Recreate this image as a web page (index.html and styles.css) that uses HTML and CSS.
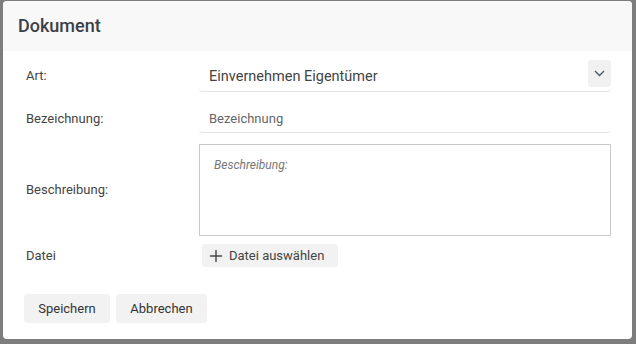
FILE: index.html
```html
<!DOCTYPE html>
<html lang="de">
<head>
    <meta charset="UTF-8">
    <title>Dokument</title>
    <link rel="stylesheet" href="styles.css">
</head>
<body>
    <div class="dialog">
        <div class="dialog-header">
            <h2>Dokument</h2>
        </div>

        <div class="form">
            <label class="label label-select">Art:</label>
            <div class="select">
                <span class="select-value">Einvernehmen Eigentümer</span>
                <span class="select-toggle">
                    <svg width="11" height="7" viewBox="0 0 11 7"><path d="M1 1l4.5 4.5L10 1" fill="none" stroke="#4d5a66" stroke-width="1.4"/></svg>
                </span>
            </div>

            <label class="label label-input">Bezeichnung:</label>
            <div class="input"><span class="placeholder">Bezeichnung</span></div>

            <label class="label label-textarea">Beschreibung:</label>
            <div class="textarea"><span class="placeholder italic">Beschreibung:</span></div>

            <label class="label label-file">Datei</label>
            <div>
                <button class="btn btn-file">
                    <svg width="12" height="12" viewBox="0 0 12 12"><path d="M6 0v12M0 6h12" stroke="#444" stroke-width="1.4"/></svg>
                    Datei auswählen
                </button>
            </div>
        </div>

        <div class="dialog-footer">
            <button class="btn btn-action">Speichern</button>
            <button class="btn btn-action">Abbrechen</button>
        </div>
    </div>
</body>
</html>
```

FILE: styles.css
```css
body {
    margin: 0;
    background: #7d7d7d;
    font-family: Roboto, "Liberation Sans", sans-serif;
    color: #444;
}

.dialog {
    margin: 1px 0 0 3px;
    width: 629px;
    height: 338px;
    background: #fff;
    border-radius: 4px;
    overflow: hidden;
}

.dialog-header {
    height: 50px;
    background: #f8f8f8;
    padding-left: 15px;
}

.dialog-header h2 {
    margin: 0;
    font-size: 18px;
    font-weight: 500;
    line-height: 50px;
    color: #3b4048;
}

/* form grid: each row holds the field plus the space below it */
.form {
    display: grid;
    grid-template-columns: 173px 412px;
    grid-template-rows: 44px 40px 100px 23px;
    align-items: start;
    padding: 9px 0 0 23px;
}

.label {
    font-size: 13px;
    color: #444;
}

.label-select { line-height: 31px; }
.label-input { line-height: 29px; }
.label-textarea { line-height: 92px; }
.label-file { line-height: 23px; }

.select,
.input {
    box-sizing: border-box;
    display: flex;
    align-items: center;
    padding-left: 10px;
    border-bottom: 1px solid #e4e4e4;
    border-radius: 0 0 4px 4px;
}

.select {
    height: 32px;
    align-items: flex-start;
}

.input {
    height: 29px;
}

.select-value {
    flex: 1;
    font-size: 14.5px;
    color: #444;
    margin-top: 8px;
}

.select-toggle {
    width: 23px;
    height: 27px;
    background: #f1f1f1;
    border-radius: 3px;
    display: flex;
    align-items: center;
    justify-content: center;
}

.placeholder {
    font-size: 13px;
    color: #666;
}

.placeholder.italic {
    font-size: 12px;
    font-style: italic;
    color: #777;
}

.textarea {
    height: 92px;
    box-sizing: border-box;
    border: 1px solid #c9c9c9;
    padding: 9px 14px;
}

/* buttons */
.btn {
    font-family: inherit;
    font-size: 13px;
    color: #444;
    background: #f2f2f2;
    border: none;
    border-radius: 3px;
    cursor: pointer;
}

.btn-file {
    margin-left: 3px;
    height: 23px;
    padding: 0 14px 0 8px;
    display: inline-flex;
    align-items: center;
    gap: 7px;
}

.dialog-footer {
    display: flex;
    gap: 6px;
    padding: 27px 0 0 21px;
}

.btn-action {
    height: 29px;
    padding: 0 14px 0 14px;
    min-width: 86px;
    color: #333;
}

.btn-action + .btn-action {
    min-width: 91px;
}
```
